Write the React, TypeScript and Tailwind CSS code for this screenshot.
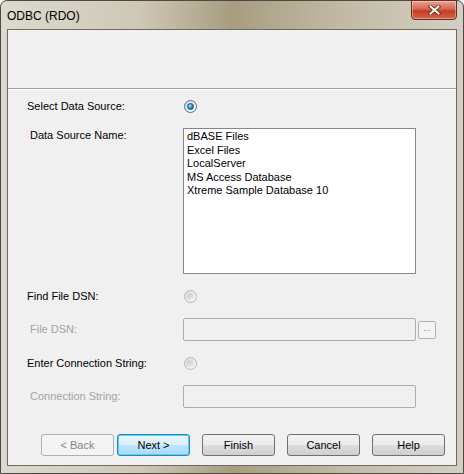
import React from 'react';

const dataSources = [
  'dBASE Files',
  'Excel Files',
  'LocalServer',
  'MS Access Database',
  'Xtreme Sample Database 10',
];

const font = "font-['Liberation_Sans',Arial,sans-serif]";

const Radio = ({ checked = false, disabled = false }: { checked?: boolean; disabled?: boolean }) => (
  <div
    className={`ml-[1px] flex h-[13px] w-[13px] items-center justify-center rounded-full border ${
      disabled
        ? 'border-[#b5b5b5] bg-gradient-to-br from-[#dcdcdc] to-[#fafafa]'
        : 'border-[#4a6f8c] bg-gradient-to-br from-[#d2d9df] to-[#ffffff]'
    }`}
  >
    {checked && (
      <div className="h-[7px] w-[7px] rounded-full border border-[#1c4e7a] bg-[radial-gradient(circle_at_35%_35%,#a9e4ff,#1a8dd0_55%,#0b4f85)]" />
    )}
    {!checked && disabled && (
      <div className="h-[7px] w-[7px] rounded-full bg-gradient-to-br from-[#c8c8c8] to-[#eeeeee]" />
    )}
  </div>
);

const TextBox = () => (
  <div className="h-[23px] w-[233px] rounded-[2px] border border-[#adadad] bg-[#f0f0f0]" />
);

const Button = ({
  label,
  variant = 'normal',
}: {
  label: string;
  variant?: 'normal' | 'default' | 'disabled';
}) => {
  const styles = {
    normal:
      'border-[#707070] bg-[linear-gradient(#f2f2f2_0%,#ebebeb_48%,#dddddd_52%,#cfcfcf_100%)] text-black',
    default:
      'border-[#3c7fb1] bg-[linear-gradient(#eaf6fd_0%,#d9f0fc_48%,#bee6fd_52%,#a7d9f5_100%)] text-black shadow-[inset_0_0_0_1px_#48d7fb]',
    disabled: 'border-[#adb2b5] bg-[#f4f4f4] text-[#838383]',
  };
  return (
    <div
      className={`flex h-[22px] w-[73px] items-center justify-center rounded-[3px] border text-[11px] ${styles[variant]}`}
    >
      {label}
    </div>
  );
};

const App = () => {
  return (
    <div className={`h-[474px] w-[464px] bg-[#f0f0f0] ${font}`}>
      <div className="relative flex h-full w-full flex-col rounded-t-[7px] border border-[#4b4a44] bg-[linear-gradient(90deg,#dcd9cf_0%,#cfc8b6_30%,#a89d80_50%,#c3bba6_75%,#d4cfc2_100%)]">
        {/* Title bar */}
        <div className="flex h-[28px] items-center pl-[6px] pt-[2px]">
          <span className="text-[12px] text-black">ODBC (RDO)</span>
        </div>
        <div className="absolute right-[6px] top-[-1px] flex h-[20px] w-[46px] items-center justify-center rounded-b-[4px] border border-[#6b2a22] bg-[linear-gradient(#e8a493_0%,#d6654f_45%,#c43c22_55%,#d4664a_100%)] shadow-[inset_0_0_0_1px_rgba(255,255,255,0.35)]">
          <svg width="13" height="10" viewBox="0 0 13 10">
            <path
              d="M2.5 1.5 L10.5 8.5 M10.5 1.5 L2.5 8.5"
              stroke="#5a2218"
              strokeWidth="3.6"
              strokeLinecap="square"
            />
            <path
              d="M2.5 1.5 L10.5 8.5 M10.5 1.5 L2.5 8.5"
              stroke="#ffffff"
              strokeWidth="2"
              strokeLinecap="square"
            />
          </svg>
        </div>

        {/* Client area */}
        <div className="mx-[6px] mb-[7px] flex flex-1 flex-col border border-[#6e6a5e] bg-[#f0f0f0] text-[11px] text-black">
          {/* Header */}
          <div className="h-[58px] bg-[#f1f1f1]" />
          <div className="h-[1px] bg-[#a0a0a0]" />
          <div className="h-[1px] bg-white" />

          <div className="pl-[19px]">
            <div className="flex h-[32px] items-center">
              <div className="w-[156px]">Select Data Source:</div>
              <Radio checked />
            </div>

            <div className="mt-[6px] flex items-start">
              <div className="w-[156px] pl-[3px] leading-[14px]">Data Source Name:</div>
              <div className="h-[146px] w-[233px] border border-[#828790] bg-white px-[3px] pt-[1px]">
                {dataSources.map((name) => (
                  <div key={name} className="leading-[13.5px]">
                    {name}
                  </div>
                ))}
              </div>
            </div>

            <div className="flex h-[44px] items-center">
              <div className="w-[156px]">Find File DSN:</div>
              <Radio disabled />
            </div>

            <div className="flex items-center">
              <div className="w-[156px] pl-[3px] text-[#a3a3a3]">File DSN:</div>
              <TextBox />
              <div className="ml-[2px] mt-[1px] flex h-[18px] w-[18px] items-center justify-center rounded-[2px] border border-[#adb2b5] bg-[#f4f4f4] pb-[4px] text-[9px] leading-none text-[#838383]">
                ...
              </div>
            </div>

            <div className="flex h-[44px] items-center">
              <div className="w-[156px]">Enter Connection String:</div>
              <Radio disabled />
            </div>

            <div className="flex items-center">
              <div className="w-[156px] pl-[3px] text-[#a3a3a3]">Connection String:</div>
              <TextBox />
            </div>
          </div>

          {/* Buttons */}
          <div className="mt-[26px] flex pl-[33px]">
            <Button label="< Back" variant="disabled" />
            <div className="ml-[3px]">
              <Button label="Next >" variant="default" />
            </div>
            <div className="ml-[12px]">
              <Button label="Finish" />
            </div>
            <div className="ml-[12px]">
              <Button label="Cancel" />
            </div>
            <div className="ml-[12px]">
              <Button label="Help" />
            </div>
          </div>
        </div>
      </div>
    </div>
  );
};

export default App;
